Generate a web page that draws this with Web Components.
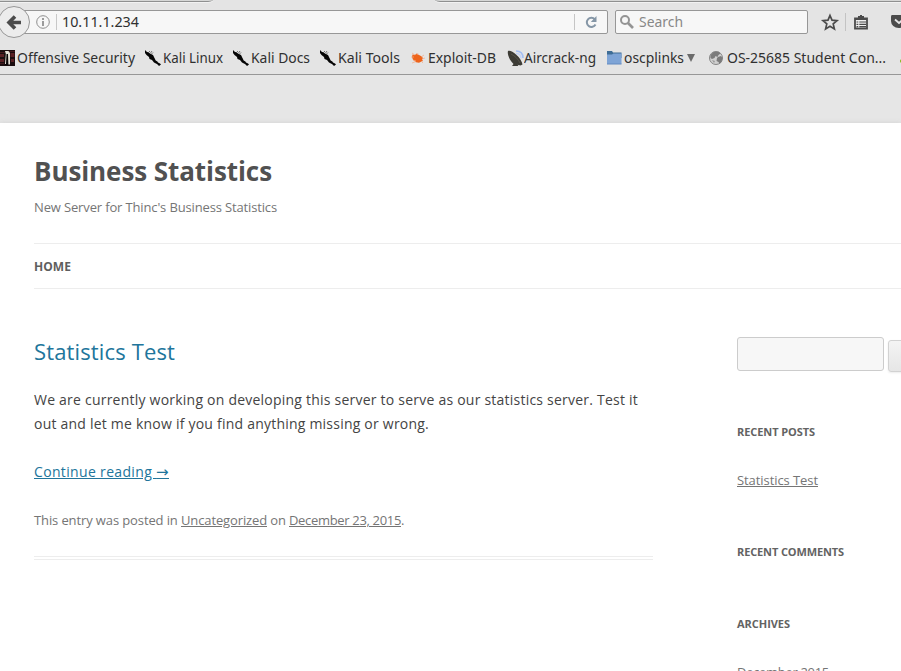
<!DOCTYPE html>
<html lang="en">
<head>
<meta charset="utf-8">
<title>Business Statistics</title>
<style>
html,body{margin:0;height:671px;overflow:hidden;background:#e6e6e6}
body{font-family:"Open Sans","Noto Sans",sans-serif}
</style>
</head>
<body>
<app-window></app-window>
<script>
const define = (name, html, init) => customElements.define(name, class extends HTMLElement {
  connectedCallback() {
    if (!this.shadowRoot) {
      this.attachShadow({mode: 'open'}).innerHTML = html;
    }
    if (init) init(this);
  }
});

/* Fits a run of text to a given width: with letter spacing, or by condensing
   the glyphs when the "squeeze" attribute is set. */
define('fit-text', `<style>:host{display:inline-block;white-space:nowrap}:host([squeeze]){margin-top:-2px}span{display:inline-block;white-space:pre;transform-origin:0 50%}</style><span><slot></slot></span>`, el => {
  const w = parseFloat(el.getAttribute('w'));
  const span = el.shadowRoot.querySelector('span');
  const fit = () => {
    const n = el.textContent.length;
    if (!w || !n) return;
    span.style.letterSpacing = '0px';
    span.style.transform = 'none';
    const own = span.getBoundingClientRect().width;
    if (el.hasAttribute('squeeze')) {
      el.style.width = w + 'px';
      el.style.flex = 'none';
      span.style.transform = `scaleX(${w / own})`;
    } else {
      span.style.letterSpacing = (w - own) / n + 'px';
    }
    if (el.hasAttribute('u')) span.style.textDecoration = 'underline';
  };
  fit();
  queueMicrotask(fit);
});

const icons = {
  offsec: `<rect width="15" height="16" fill="#1b0d0f"/><path d="M0 4h4v3H0zM0 9h4v3H0zM10.500 3h4v4h-4zM11 9h3v3h-3z" fill="#5a2024"/><path d="M0 2h5v1H0zM9 1h6v1H9zM0 13h4v1H0z" fill="#41191d"/><path d="M5 2h4l1 13H5z" fill="#090607"/><path d="M5 1h3.500L10 3v11.500H8.400L8 4H6.500L6 14H5L5.800 4z" fill="#e6dfd6"/>`,
  kali: `<path d="M0 0l2 2 1.500 .3L5 3.500l3 1.500L9.500 8l1.200 2.500 1.700 1 .6 1L15 13.500l1 1L14 16l-2-2-3-1.500-2-2.500L4.500 9 4 7 1.500 5 0 3z" fill="#050505"/><path d="M4 2l1-1M6.500 4L8 2.500M5.500 3L7 1" stroke="#444" stroke-width=".7"/>`,
  exploit: `<path d="M2.500 4.500L5 5l1.500-1.500L9 5l3 1.500 1 2-1 1 1 1.500-2 .8-2 1-3-.5-3-2.500L2 7z" fill="#ee641b"/><path d="M2 3l3 2M1 7l3 0M2 13l4-1.500M3 10l3 1M8 3L7 5M15 8l-3 1M14 5l-3 2M13 13l-2-2" stroke="#f3a984" stroke-width=".7"/>`,
  aircrack: `<path d="M8 1c5 0 7 3 7 7" fill="none" stroke="#a3bef3" stroke-width="1.600"/><path d="M8 3.500c3 0 5 2 5 5" fill="none" stroke="#c3d3f8" stroke-width="1.400"/><path d="M0 1c1.500-1 5 .5 8 3.500 4 3.500 6 7 6.500 10l-2 1-3-.7 1 1.200H4l1.500-2C1.500 10-1 4 0 1z" fill="#3d3c36"/><path d="M3 4c4 2 7 5 9 9" stroke="#55534b" fill="none"/>`,
  folder: `<path d="M0 1h5l1 1.500h8.500V8H0z" fill="#3e6d96"/><path d="M0 4.500h5L6.500 3.500H14.500v10.500H0z" fill="#7ea4d6"/><path d="M0 13.500h14.500v1H0z" fill="#638bc0"/>`,
  globe: `<circle cx="7" cy="8" r="6.500" fill="#d0d0d0" stroke="#858585"/><path d="M1.500 5l3-3 5-.3 2 1.800-2 1.500-1 2-2-1-1 2-2.500 1-1.500-1zM9 7l3-1 1.500 2-1 4-2 2-1-2-2-1 .5-3z" fill="#7b7b7b"/><path d="M3 10l3 1-1 2z" fill="#999"/>`,
  reload: `<path d="M9.800 3.200A4.600 4.600 0 1 0 10.500 8.500" fill="none" stroke="#8596a6" stroke-width="2"/><path d="M11.500 0v6H5.800z" fill="#8596a6"/>`,
  search: `<circle cx="5" cy="5" r="4" fill="none" stroke="#949494" stroke-width="2"/><path d="M8 8l5 5" stroke="#949494" stroke-width="2.600"/>`,
  star: `<path d="M8 1.500l2 4.700 5 .4-3.800 3.300 1.200 5L8 12.200l-4.400 2.700 1.200-5L1 6.600l5-.4z" fill="none" stroke="#4b4b4b" stroke-width="1.700"/>`,
  clip: `<path d="M1 3.500h12v10H1z" fill="#f1f1f1" stroke="#4b4b4b" stroke-width="1.800"/><path d="M4 1h2V0h2v1h2v3H4zM1 3h12v2H1z" fill="#4b4b4b"/><path d="M2.500 7h9.500M2.500 9.300h9.500M2.500 11.600h9.500" stroke="#4b4b4b" stroke-width="1.200"/><path d="M4.800 5.500v7" stroke="#f1f1f1"/>`,
  pocket: `<path d="M1 0h13q1.500 0 1.500 1.500V6a7.750 7 0 0 1-15.500 0V1.500Q0 0 1 0z" fill="#4b4b4b"/><path d="M4 4.500l4 3.500 4-3.500" fill="none" stroke="#e6e6e6" stroke-width="1.800"/>`,
  info: `<circle cx="7" cy="7" r="6.300" fill="none" stroke="#8f8f8f" stroke-width="1"/><path d="M6 6h2v5H6zM6 3h2v2H6z" fill="#9b9b9b"/>`,
  back: `<path d="M15 7.500H4M9 1.500L3 7.500l6 6" fill="none" stroke="#4b4b4b" stroke-width="3.600"/>`
};
define('ui-icon', `<style>:host{display:block;flex:none}svg{display:block;overflow:visible}</style><svg></svg>`, el => {
  const s = el.shadowRoot.querySelector('svg');
  const w = el.getAttribute('w') || 16, h = el.getAttribute('h') || 16;
  s.setAttribute('width', w); s.setAttribute('height', h);
  s.innerHTML = icons[el.getAttribute('name')] || '';
});

define('tab-strip', `<style>
:host{display:flex;justify-content:space-between;height:3px;overflow:hidden}
i{display:block;box-sizing:border-box;height:2px;background:#d6d7d6;border-bottom:1px solid #8f9090;box-shadow:0 1px #f2f2f2}
.l{width:213px;border-bottom-right-radius:8px 2px}.r{width:466px;border-bottom-left-radius:8px 2px}
</style><i class="l"></i><i class="r"></i>`);

define('nav-bar', `<style>
:host{display:flex;align-items:center;height:38px;font:15px/20px "Noto Sans",sans-serif;color:#303030}
.back{box-sizing:border-box;flex:none;width:32px;height:32px;margin-left:-2px;border:1px solid #979797;border-radius:50%;background:#ececec;display:flex;align-items:center;justify-content:center;z-index:1}
.url,.search{box-sizing:border-box;flex:none;height:24px;border:1px solid #979797;border-radius:2px;background:#f7f7f7;display:flex;align-items:center}
.url{width:593px;margin-left:-15px;padding-left:20px}
.sep{width:1px;height:16px;background:#c8c8c8;margin:0 5px 0 6px}
.grow{flex:1}.sep2{width:1px;height:16px;background:#c5c5c5;margin-right:10px}
.search{width:193px;margin-left:7px;padding-left:4px;color:#888;gap:5px}
.search ui-icon{margin-top:-1px}
.star{margin-left:14px}.sep3{flex:none;width:1px;height:18px;background:#c3c3c3;margin:0 8px 0 7px}.pocket{margin-left:23px}
</style>
<div class="back"><ui-icon name="back" w="16" h="15"></ui-icon></div>
<div class="url"><ui-icon name="info" w="14" h="14"></ui-icon><div class="sep"></div><fit-text squeeze w="77">10.11.1.234</fit-text><div class="grow"></div><div class="sep2"></div><ui-icon name="reload" w="12" h="12" style="margin-right:10px"></ui-icon></div>
<div class="search"><ui-icon name="search" w="14" h="14"></ui-icon><fit-text squeeze w="44">Search</fit-text></div>
<ui-icon class="star" name="star"></ui-icon><div class="sep3"></div><ui-icon name="clip" w="14" h="14"></ui-icon><ui-icon class="pocket" name="pocket" w="16" h="14"></ui-icon>`);

define('book-mark', `<style>
:host{display:flex;align-items:center;flex:none;font:15px/20px "Noto Sans",sans-serif;color:#303030}
ui-icon{margin-right:var(--gap,2px)}
</style><ui-icon></ui-icon><fit-text squeeze></fit-text>`, el => {
  const i = el.shadowRoot.querySelector('ui-icon'), t = el.shadowRoot.querySelector('fit-text');
  i.setAttribute('name', el.getAttribute('icon')); i.setAttribute('w', el.getAttribute('iw') || 16);
  i.connectedCallback();
  t.setAttribute('w', el.getAttribute('w')); t.textContent = el.getAttribute('label');
  t.connectedCallback();
});

define('bookmark-bar', `<style>
:host{display:flex;align-items:center;height:33px;border-bottom:1px solid #979797}
.tri{flex:none;border:4px solid transparent;border-top:8px solid #6b6b6b;border-bottom:0;margin:1px 14px 0 3px}
.dot{flex:none;width:4px;height:4px;background:#86b817;margin:7px 0 0 14px;border-radius:2px}
</style>
<book-mark icon="offsec" iw="15" label="Offensive Security" w="118"></book-mark>
<book-mark icon="kali" label="Kali Linux" w="60" style="margin-left:10px"></book-mark>
<book-mark icon="kali" label="Kali Docs" w="59" style="margin-left:10px"></book-mark>
<book-mark icon="kali" label="Kali Tools" w="62" style="margin-left:10px"></book-mark>
<book-mark icon="exploit" label="Exploit-DB" w="68" style="margin-left:10px"></book-mark>
<book-mark icon="aircrack" label="Aircrack-ng" w="72" style="margin-left:12px;--gap:0px"></book-mark>
<book-mark icon="folder" iw="15" label="oscplinks" w="60" style="margin-left:11px"></book-mark><div class="tri"></div>
<book-mark icon="globe" label="OS-25685 Student Con..." w="159"></book-mark><div class="dot"></div>`);

define('browser-chrome', `<style>:host{display:block;height:75px;overflow:hidden;background:#e4e4e4}</style>
<tab-strip></tab-strip><nav-bar></nav-bar><bookmark-bar></bookmark-bar>`);

define('site-header', `<style>
:host{display:block;padding-top:30px}
h1{margin:0;font-size:26px;line-height:36px;color:#515151;font-weight:700}
p{margin:8px 0 0;font-size:13px;line-height:20px;color:#757575}
nav{margin-top:26px;height:44px;border:1px solid #ededed;border-width:1px 0;font-size:12px;line-height:46px;font-weight:700;color:#5e5e5e}
fit-text{vertical-align:top}
</style><h1><fit-text w="238">Business Statistics</fit-text></h1><p><fit-text w="243">New Server for Thinc's Business Statistics</fit-text></p><nav><fit-text w="37">HOME</fit-text></nav>`);

define('post-entry', `<style>
:host{display:block;width:619px;flex:none}
h2{margin:48px 0 0;font-size:22px;line-height:28px;font-weight:400;color:#21759b}
.b{font-size:14px;line-height:24px;color:#444;margin-top:23px}
.c{font-size:14px;line-height:24px;height:24px;color:#21759b;margin-top:24px}
.m{font-size:13px;line-height:24px;color:#757575;margin-top:24px;display:flex}
.e{height:2px;border:1px solid #ededed;border-width:1px 0;margin-top:24px}
fit-text{display:block}.arrow{font-family:"DejaVu Sans",sans-serif;font-size:15px;line-height:1}
</style>
<h2><fit-text w="141">Statistics Test</fit-text></h2>
<div class="b"><fit-text w="604">We are currently working on developing this server to serve as our statistics server. Test it</fit-text><fit-text w="395">out and let me know if you find anything missing or wrong.</fit-text></div>
<div class="c"><fit-text u w="135">Continue reading <span class="arrow">→</span></fit-text></div>
<div class="m"><fit-text w="147">This entry was posted in </fit-text><fit-text u w="86">Uncategorized</fit-text><fit-text w="22"> on </fit-text><fit-text u w="112">December 23, 2015</fit-text><fit-text>.</fit-text></div>
<div class="e"></div>`);

define('side-bar', `<style>
:host{display:block;width:200px;flex:none}
form{display:flex;margin:48px 0 0;gap:4px}
.in{box-sizing:border-box;flex:none;width:147px;height:34px;border:1px solid #ccc;border-radius:3px;background:#f7f7f7}
.bt{box-sizing:border-box;flex:none;width:60px;height:32px;margin-top:3px;border:1px solid #d2d2d2;border-radius:3px;background:linear-gradient(#f4f4f4,#e6e6e6);box-shadow:0 1px 2px rgba(64,64,64,.1)}
h3{margin:0;font-size:11px;line-height:24px;font-weight:700;color:#636363}
.l{font-size:13px;line-height:24px;color:#757575;margin-top:24px}
fit-text{display:block}
</style>
<form><div class="in"></div><div class="bt"></div></form>
<h3 style="margin-top:48px"><fit-text w="78">RECENT POSTS</fit-text></h3>
<div class="l"><fit-text u w="81">Statistics Test</fit-text></div>
<h3 style="margin-top:48px"><fit-text w="107">RECENT COMMENTS</fit-text></h3>
<h3 style="margin-top:48px"><fit-text w="53">ARCHIVES</fit-text></h3>
<div class="l"><fit-text u w="92">December 2015</fit-text></div>`);

define('site-page', `<style>
:host{display:block;margin-top:48px;height:548px;padding-left:34px;background:#fff;overflow:hidden;box-shadow:0 2px 6px rgba(100,100,100,.3)}
.cols{display:flex;gap:84px}
</style><site-header></site-header><div class="cols"><post-entry></post-entry><side-bar></side-bar></div>`);

define('app-window', `<style>:host{display:block;width:901px;height:671px;overflow:hidden;background:#e6e6e6}</style>
<browser-chrome></browser-chrome><site-page></site-page>`);
</script>
</body>
</html>
